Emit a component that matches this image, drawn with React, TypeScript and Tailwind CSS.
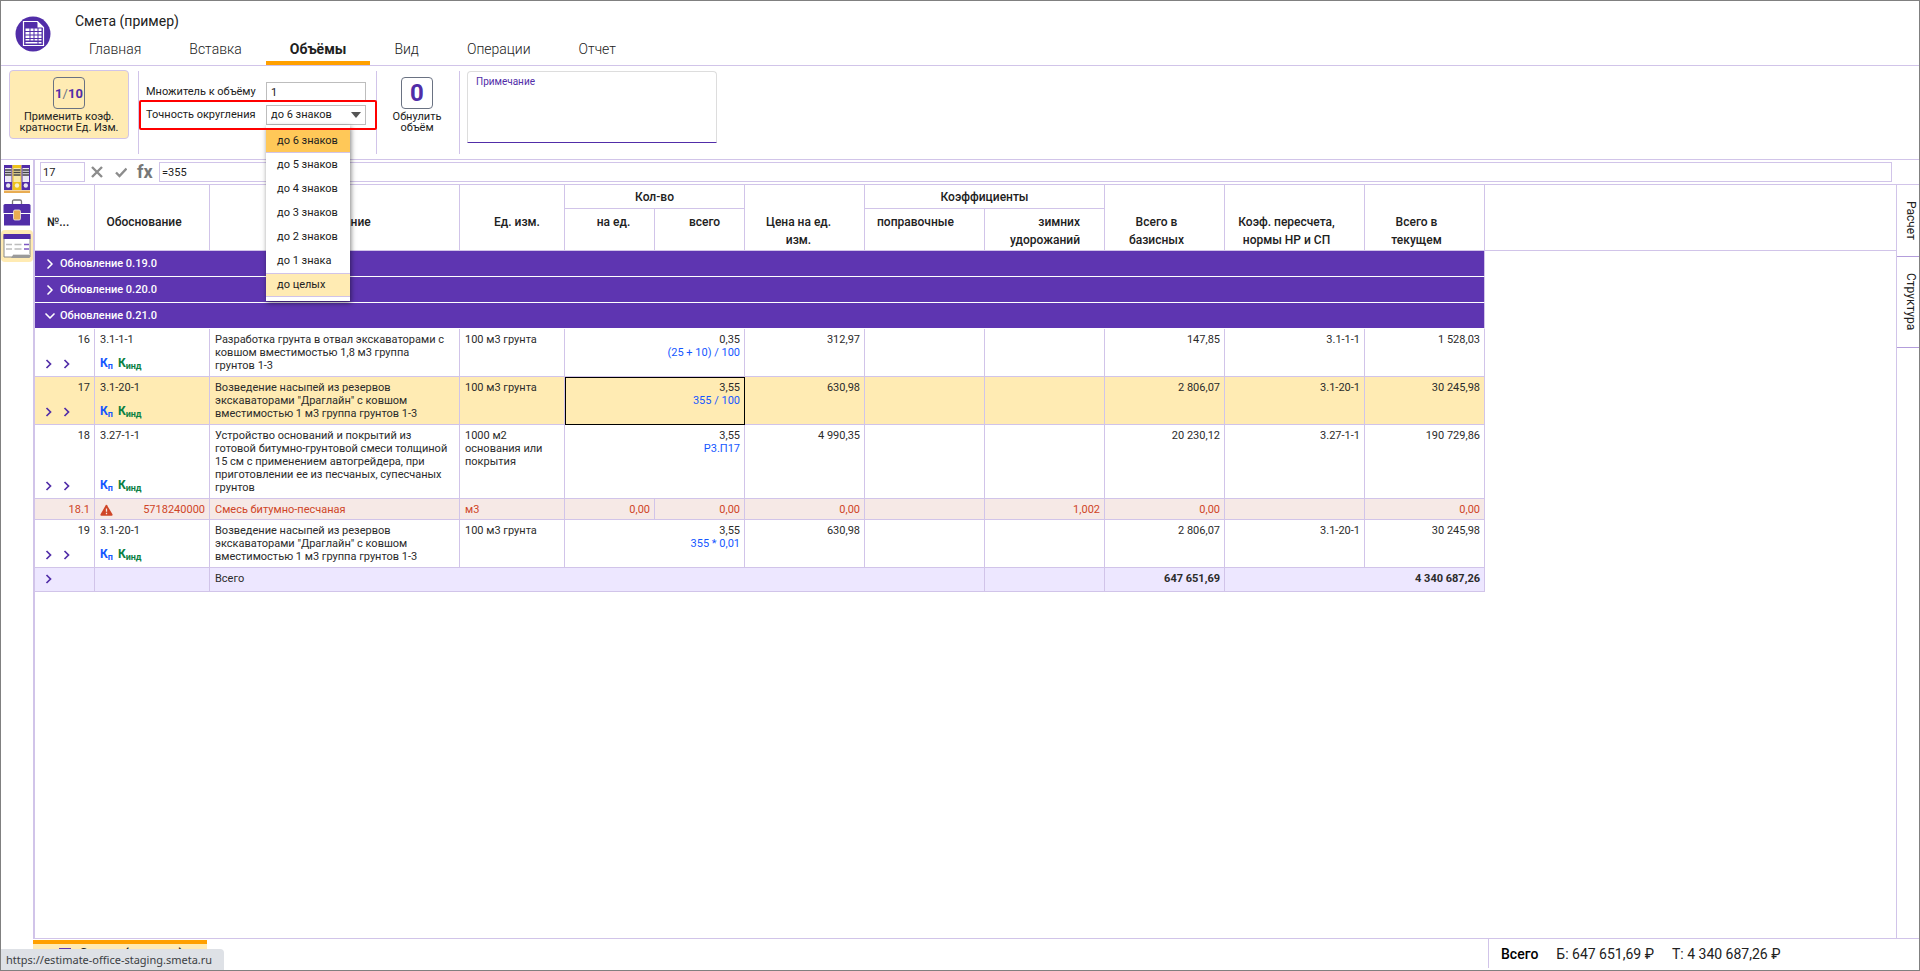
import { useState } from 'react';
import clsx from 'clsx';
import { ChevronDown, ChevronRight } from 'lucide-react';

const tabs = ['Главная', 'Вставка', 'Объёмы', 'Вид', 'Операции', 'Отчет'];

const precisions = [
  'до 6 знаков',
  'до 5 знаков',
  'до 4 знаков',
  'до 3 знаков',
  'до 2 знаков',
  'до 1 знака',
  'до целых',
];

const sections = [
  { title: 'Обновление 0.19.0', open: false },
  { title: 'Обновление 0.20.0', open: false },
  { title: 'Обновление 0.21.0', open: true },
];

type Work = {
  num: string;
  code: string;
  name: string;
  unit: string;
  qty: string;
  formula: string;
  price: string;
  base: string;
  index: string;
  current: string;
};

const works: Work[] = [
  {
    num: '16',
    code: '3.1-1-1',
    name: 'Разработка грунта в отвал экскаваторами с ковшом вместимостью 1,8 м3 группа грунтов\u00a01-3',
    unit: '100 м3 грунта',
    qty: '0,35',
    formula: '(25 + 10) / 100',
    price: '312,97',
    base: '147,85',
    index: '3.1-1-1',
    current: '1 528,03',
  },
  {
    num: '17',
    code: '3.1-20-1',
    name: 'Возведение насыпей из резервов экскаваторами "Драглайн" с ковшом вместимостью 1 м3 группа грунтов\u00a01-3',
    unit: '100 м3 грунта',
    qty: '3,55',
    formula: '355 / 100',
    price: '630,98',
    base: '2 806,07',
    index: '3.1-20-1',
    current: '30 245,98',
  },
  {
    num: '18',
    code: '3.27-1-1',
    name: 'Устройство оснований и покрытий из готовой битумно-грунтовой смеси толщиной 15 см с применением автогрейдера, при приготовлении ее из песчаных, супесчаных грунтов',
    unit: '1000 м2 основания или покрытия',
    qty: '3,55',
    formula: 'Р3.П17',
    price: '4 990,35',
    base: '20 230,12',
    index: '3.27-1-1',
    current: '190 729,86',
  },
  {
    num: '19',
    code: '3.1-20-1',
    name: 'Возведение насыпей из резервов экскаваторами "Драглайн" с ковшом вместимостью 1 м3 группа грунтов\u00a01-3',
    unit: '100 м3 грунта',
    qty: '3,55',
    formula: '355 * 0,01',
    price: '630,98',
    base: '2 806,07',
    index: '3.1-20-1',
    current: '30 245,98',
  },
];

const cell = 'border-r border-b border-[#d1c4e9] pt-1 align-top';
const textCell = clsx(cell, 'pl-[5px] pr-[7px]');
const numCell = clsx(cell, 'pl-1 pr-1 text-right');
const head = 'border-r border-b border-[#d1c4e9] align-top font-medium';

function Logo() {
  return (
    <svg viewBox="0 0 36 36" className="size-9 shrink-0" aria-hidden="true">
      <circle cx="18" cy="18" r="17.5" fill="#512da8" />
      <path d="M8.5 5.5h14l6 6v18h-20z" fill="none" stroke="#fff" strokeWidth="1.2" />
      <path d="M22.5 5.5v6h6z" fill="#fff" />
      <path
        d="M10.5 12.5h4V15h-4zM15.5 12.5h3V15h-3zM19.5 12.5h3V15h-3zM23.5 12.5h3V15h-3zM10.5 16h4v2.5h-4zM15.5 16h3v2.5h-3zM19.5 16h3v2.5h-3zM23.5 16h3v2.5h-3zM10.5 19.5h4V22h-4zM15.5 19.5h3V22h-3zM19.5 19.5h3V22h-3zM23.5 19.5h3V22h-3zM10.5 23h4v1.5h-4zM15.5 23h3v1.5h-3zM19.5 23h3v1.5h-3zM23.5 23h3v1.5h-3zM10.5 26h12v1.5h-12zM23.5 26h3v1.5h-3z"
        fill="#fff"
      />
    </svg>
  );
}

function FoldersIcon() {
  return (
    <svg viewBox="0 0 28 29" className="h-[29px] w-7" aria-hidden="true">
      <rect x="1" y="1" width="8.5" height="25" fill="#512da8" />
      <rect x="9.5" y="1" width="9" height="25" fill="#edc21c" />
      <rect x="18.5" y="1" width="8.5" height="25" fill="#512da8" />
      <path d="M2 4h6.5v14H2zM19.5 4H26v14h-6.5z" fill="#ece7f5" />
      <path d="M10.5 4h7v14h-7z" fill="#f7e9a6" />
      <path
        d="M2 6h6.5M2 8.5h6.5M2 11h6.5M10.5 6h7M10.5 8.5h7M10.5 11h7M19.5 6H26M19.5 8.5H26M19.5 11H26"
        stroke="#444"
        strokeWidth="1.3"
      />
      <circle cx="5.2" cy="21.5" r="2.2" fill="#e8e4f0" />
      <circle cx="14" cy="21.5" r="2.2" fill="#f5eecb" />
      <circle cx="22.8" cy="21.5" r="2.2" fill="#e8e4f0" />
      <rect x="1" y="26.5" width="26" height="2.5" fill="#e8ac52" />
    </svg>
  );
}

function CaseIcon() {
  return (
    <svg viewBox="0 0 28 27" className="h-[27px] w-7" aria-hidden="true">
      <path d="M9.5 5V2.5Q9.5 1 11 1h6q1.5 0 1.5 1.5V5" fill="none" stroke="#777" strokeWidth="1.3" />
      <path d="M2 5h24q1.5 0 1.5 1.5V14H.5V6.5Q.5 5 2 5z" fill="#512da8" />
      <path d="M1 15h26v11.5H1z" fill="#512da8" />
      <rect x="10.5" y="11" width="7" height="10" rx="1.5" fill="#e8ac52" stroke="#f3ecdf" strokeWidth=".8" />
    </svg>
  );
}

function SheetIcon() {
  return (
    <svg viewBox="0 0 28 25" className="h-[25px] w-7" aria-hidden="true">
      <path d="M1 1.5h26V23H1z" fill="#fff" stroke="#8a8a8a" />
      <path d="M.5 0h27v5H.5z" fill="#512da8" />
      <path d="M3 10.5h6M11.5 10.5h7M3 15h6M11.5 15h7" stroke="#bdbdbd" strokeWidth="1.3" />
      <path d="M21 10.5h5M21 15h5" stroke="#7e57c2" strokeWidth="1.3" />
      <path d="M8 24l2-3h17v2l-1 1z" fill="#9a9a9a" />
      <path d="M10 20.5h17" stroke="#ddd" />
    </svg>
  );
}

function WarningIcon() {
  return (
    <svg viewBox="0 0 24 22" className="h-3 w-[13px]" role="img" aria-label="Предупреждение">
      <path d="M11 1.5q1-1 2 .5l10 17q.8 2.5-1.5 2.5h-19Q.2 21.500 1 19L11 1.500z" fill="#cf4527" />
      <path d="M12 8v6M12 16v3" stroke="#f7e8e3" strokeWidth="2.4" />
    </svg>
  );
}

function RowChevron() {
  return (
    <button type="button" aria-label="Развернуть" className="flex h-3 w-[18px] items-center text-[#512da8]">
      <svg viewBox="0 0 8 10" className="h-[10px] w-2" fill="none" stroke="currentColor" strokeWidth="1.7">
        <path d="M1.5 1l4 4-4 4" />
      </svg>
    </button>
  );
}

function Header({ active, onSelect }: { active: string; onSelect: (tab: string) => void }) {
  return (
    <header className="flex h-[65px] shrink-0 border-b border-[#d1c4e9] pl-[14px]">
      <div className="pt-[15px]">
        <Logo />
      </div>
      <div className="flex flex-col justify-between pl-[14px] pt-2">
        <h1 className="pl-2.5 text-sm leading-6">Смета (пример)</h1>
        <nav className="flex">
          {tabs.map(tab => (
            <button
              key={tab}
              type="button"
              onClick={() => onSelect(tab)}
              className={clsx(
                'h-8 border-b-4 px-6 pt-1 text-sm leading-5',
                tab === active ? 'border-[#ffa000] font-bold' : 'border-transparent font-light',
              )}
            >
              {tab}
            </button>
          ))}
        </nav>
      </div>
    </header>
  );
}

function Ribbon() {
  const [precision, setPrecision] = useState(precisions[0]);
  const hovered = 'до целых';

  return (
    <section className="flex h-[94px] shrink-0 border-b border-[#d1c4e9] pl-2 pt-1 text-[11px]">
      <button
        type="button"
        className="flex h-[69px] w-[120px] flex-col items-center rounded-sm border border-[#d1c4e9] bg-[#ffebb3] pt-1.5 leading-[11px]"
      >
        <span className="mb-0.5 flex size-8 items-center justify-center rounded border border-gray-500 text-[13px] font-bold text-[#512da8]">
          1<span className="font-normal text-gray-500">/</span>10
        </span>
        Применить коэф.
        <br />
        кратности Ед. Изм.
      </button>

      {/* Multiplier and rounding */}
      <div className="relative ml-[9px] mt-px h-[83px] w-[239px] border-x border-[#d1c4e9] pl-[7px] pt-[11px]">
        <div className="flex h-[23px] items-start">
          <label htmlFor="factor" className="w-[120px] leading-5">Множитель к объёму</label>
          <input id="factor" defaultValue="1" className="h-5 w-[100px] border border-[#bdbdbd] px-1" />
        </div>
        <div className="relative flex items-start">
          <label htmlFor="precision" className="w-[120px] leading-5">Точность округления</label>
          <select
            id="precision"
            value={precision}
            onChange={e => setPrecision(e.target.value)}
            className="h-5 w-[100px] appearance-none border border-[#bdbdbd] px-1"
          >
            {precisions.map(item => (
              <option key={item}>{item}</option>
            ))}
          </select>
          <svg viewBox="0 0 10 6" className="pointer-events-none absolute left-[205px] top-[7px] h-1.5 w-2.5" aria-hidden="true">
            <path d="M0 0h10L5 6z" fill="#555" />
          </svg>
          <ul className="absolute left-[120px] top-5 z-10 w-[84px] bg-white py-1 shadow-[1px_2px_5px_rgba(0,0,0,0.5)]">
            {precisions.map(item => (
              <li key={item}>
                <button
                  type="button"
                  onClick={() => setPrecision(item)}
                  className={clsx(
                    'h-6 w-full border-y pl-[11px] text-left leading-5',
                    item === precision && 'border-t-transparent border-b-[#d1c4e9] bg-[#ffc858]',
                    item === hovered && 'border-[#d1c4e9] bg-[#ffebb3]',
                    item !== precision && item !== hovered && 'border-transparent',
                  )}
                >
                  {item}
                </button>
              </li>
            ))}
          </ul>
        </div>
        <div className="pointer-events-none absolute left-0 top-[29px] z-20 h-[30px] w-[238px] rounded-xs border-2 border-[#ff0000]" />
      </div>

      <button type="button" className="flex w-[82px] flex-col items-center pr-0.5 pt-[7px] leading-[11px]">
        <span className="mb-0.5 flex size-8 items-center justify-center rounded border border-gray-500 text-2xl font-bold text-[#512da8]">
          0
        </span>
        Обнулить
        <br />
        объём
      </button>

      <div className="mt-px h-[83px] border-l border-[#d1c4e9] pl-[7px]">
        <div className="flex h-[72px] w-[250px] flex-col rounded-t border border-b-[#512da8] border-[#ddd] px-2">
          <label htmlFor="note" className="pt-1 text-[10px] leading-3 text-[#512da8]">Примечание</label>
          <textarea id="note" className="w-full grow resize-none outline-none" />
        </div>
      </div>
    </section>
  );
}

function FormulaBar() {
  return (
    <div className="flex h-[25px] shrink-0 items-start border-b border-[#d1c4e9] pl-[5px] pr-[27px] pt-0.5 text-[11px]">
      <input aria-label="Строка" defaultValue="17" className="h-5 w-[45px] border border-[#d1c4e9] px-0.5" />
      <button type="button" aria-label="Отменить" className="ml-1.5 mt-1">
        <svg viewBox="0 0 12 12" className="size-3" stroke="#8c8c8c" strokeWidth="2.4">
          <path d="M1 1l10 10M11 1L1 11" />
        </svg>
      </button>
      <button type="button" aria-label="Применить" className="ml-3 mt-1">
        <svg viewBox="0 0 12 12" className="size-3" fill="none" stroke="#8c8c8c" strokeWidth="2.4">
          <path d="M1 6.5L4.500 10l7-7.500" />
        </svg>
      </button>
      <span className="ml-2.5 w-[22px] text-lg font-bold leading-5 text-[#777]">fx</span>
      <input aria-label="Формула" defaultValue="=355" className="h-5 grow border border-[#d1c4e9] px-0.5" />
    </div>
  );
}

function WorkRow({ work, selected }: { work: Work; selected: boolean }) {
  return (
    <tr className={clsx('h-12', selected && 'bg-[#ffebb3]')}>
      <td className={clsx(numCell, 'h-px')}>
        <div className="flex h-full flex-col justify-between pb-1.5">
          {work.num}
          <div className="flex pl-1.5">
            <RowChevron />
            <RowChevron />
          </div>
        </div>
      </td>
      <td className={clsx(textCell, 'h-px')}>
        <div className="flex h-full flex-col justify-between pb-1.5">
          {work.code}
          <div className="flex gap-[5px] text-xs font-bold leading-[13px]">
            <span className="text-[#1557ff]">К<sub>п</sub></span>
            <span className="text-[#0b8043]">К<sub>инд</sub></span>
          </div>
        </div>
      </td>
      <td className={clsx(textCell, 'pb-1')}>{work.name}</td>
      <td className={textCell}>{work.unit}</td>
      <td colSpan={2} className={clsx(numCell, selected && 'outline -outline-offset-1 outline-black')}>
        {work.qty}
        <div className="text-[#1557ff]">{work.formula}</div>
      </td>
      <td className={numCell}>{work.price}</td>
      <td className={cell} />
      <td className={cell} />
      <td className={numCell}>{work.base}</td>
      <td className={numCell}>{work.index}</td>
      <td className={numCell}>{work.current}</td>
      <td className="bg-white" />
    </tr>
  );
}

function EstimateTable() {
  return (
    <table className="w-full table-fixed border-separate border-spacing-0 text-[11px] leading-[13px]">
      <colgroup>
        <col className="w-[60px]" />
        <col className="w-[115px]" />
        <col className="w-[250px]" />
        <col className="w-[105px]" />
        <col className="w-[90px]" />
        <col className="w-[90px]" />
        <col className="w-[120px]" />
        <col className="w-[120px]" />
        <col className="w-[120px]" />
        <col className="w-[120px]" />
        <col className="w-[140px]" />
        <col className="w-[120px]" />
        <col />
      </colgroup>
      <thead className="text-xs leading-[18px]">
        <tr className="h-6">
          <th rowSpan={2} className={clsx(head, 'pl-3 pt-7 text-left')}>№...</th>
          <th rowSpan={2} className={clsx(head, 'pr-4 pt-7')}>Обоснование</th>
          <th rowSpan={2} className={clsx(head, 'pr-3 pt-7')}>Наименование</th>
          <th rowSpan={2} className={clsx(head, 'pl-2.5 pt-7')}>Ед. изм.</th>
          <th colSpan={2} className={clsx(head, 'pt-[3px]')}>Кол-во</th>
          <th rowSpan={2} className={clsx(head, 'pl-3 pr-6 pt-7')}>Цена на ед. изм.</th>
          <th colSpan={2} className={clsx(head, 'pt-[3px]')}>Коэффициенты</th>
          <th rowSpan={2} className={clsx(head, 'pl-5 pr-9 pt-7')}>Всего в базисных</th>
          <th rowSpan={2} className={clsx(head, 'pr-4 pt-7')}>Коэф. пересчета, нормы НР и СП</th>
          <th rowSpan={2} className={clsx(head, 'pl-5 pr-9 pt-7')}>Всего в текущем</th>
          <th rowSpan={2} className="border-b border-[#d1c4e9]" />
        </tr>
        <tr className="h-[42px]">
          <th className={clsx(head, 'pl-2 pt-1')}>на ед.</th>
          <th className={clsx(head, 'pl-2.5 pt-1')}>всего</th>
          <th className={clsx(head, 'pl-3 pt-1 text-left')}>поправочные</th>
          <th className={clsx(head, 'pl-3 pr-6 pt-1 text-right')}>зимних удорожаний</th>
        </tr>
      </thead>
      <tbody className="text-[#2b2b2b]">
        {sections.map(section => {
          const Chevron = section.open ? ChevronDown : ChevronRight;
          return (
            <tr key={section.title} className="h-[26px]">
              <td colSpan={12} className="border-r border-b border-r-[#d1c4e9] border-b-white bg-[#5e35b1] p-0">
                <button type="button" className="flex items-center gap-0.5 pl-[7px] font-medium text-white">
                  <Chevron className="size-4" strokeWidth={2.5} />
                  {section.title}
                </button>
              </td>
              <td />
            </tr>
          );
        })}
        {works.slice(0, 3).map(work => (
          <WorkRow key={work.num} work={work} selected={work.num === '17'} />
        ))}
        <tr className="h-[21px] bg-[#f6e9e6] text-[#cf4527]">
          <td className={numCell}>18.1</td>
          <td className={clsx(cell, 'pl-[5px] pr-1')}>
            <div className="flex items-center justify-between">
              <WarningIcon />
              5718240000
            </div>
          </td>
          <td className={textCell}>Смесь битумно-песчаная</td>
          <td className={textCell}>м3</td>
          <td className={numCell}>0,00</td>
          <td className={numCell}>0,00</td>
          <td className={numCell}>0,00</td>
          <td className={cell} />
          <td className={numCell}>1,002</td>
          <td className={numCell}>0,00</td>
          <td className={cell} />
          <td className={numCell}>0,00</td>
          <td className="bg-white" />
        </tr>
        <WorkRow work={works[3]} selected={false} />
        <tr className="h-6 bg-[#ede7ff]">
          <td className={cell}>
            <div className="pl-2.5 pt-px">
              <RowChevron />
            </div>
          </td>
          <td className={cell} />
          <td colSpan={6} className={textCell}>Всего</td>
          <td className={cell} />
          <td className={clsx(numCell, 'font-bold')}>647 651,69</td>
          <td className={clsx(numCell, 'font-bold')} colSpan={2}>4 340 687,26</td>
          <td className="bg-white" />
        </tr>
      </tbody>
    </table>
  );
}

export default function App() {
  const [tab, setTab] = useState('Объёмы');

  return (
    <div className="relative flex h-screen flex-col overflow-hidden border border-[#808080] bg-white font-[Roboto,sans-serif] text-[#212121]">
      <Header active={tab} onSelect={setTab} />
      <Ribbon />

      <div className="flex min-h-0 grow">
        <aside className="flex w-8 shrink-0 flex-col items-center pt-1">
          <button type="button" aria-label="Справочники"><FoldersIcon /></button>
          <button type="button" aria-label="Портфель" className="mt-1.5"><CaseIcon /></button>
          <button type="button" aria-label="Сметы" className="mt-1 flex h-8 w-8 items-center justify-center rounded bg-[#ffebb3]">
            <SheetIcon />
          </button>
        </aside>

        <div className="flex min-w-0 grow flex-col">
          <div className="flex min-h-0 grow flex-col border-b border-l-2 border-[#d1c4e9]">
            <FormulaBar />
            <div className="flex min-h-0 grow">
              <main className="min-w-0 grow overflow-hidden">
                <EstimateTable />
              </main>
              <nav className="flex w-[23px] shrink-0 flex-col border-l border-[#d1c4e9] text-xs">
                <button type="button" className="flex h-[72px] items-center justify-center border-b border-[#b39ddb] pl-1.5 [writing-mode:vertical-rl]">
                  Расчет
                </button>
                <button type="button" className="flex h-[91px] items-center justify-center border-b border-[#b39ddb] pl-1.5 [writing-mode:vertical-rl]">
                  Структура
                </button>
              </nav>
            </div>
          </div>

          <footer className="flex h-[31px] shrink-0 items-start justify-between text-sm">
            <button type="button" className="mt-px flex h-[30px] w-[174px] items-start gap-2 border-t-4 border-[#ffa000] bg-[#ffebb3] pl-[26px] font-medium">
              <span className="mt-1 size-3 bg-[#5e35b1]" />
              Смета (пример)
            </button>
            <div className="flex h-[29px] w-[431px] items-center gap-[18px] border-l border-[#d1c4e9] pl-3">
              <span className="font-medium text-black">Всего</span>
              <span>Б: 647 651,69 ₽</span>
              <span>Т: 4 340 687,26 ₽</span>
            </div>
          </footer>
        </div>
      </div>

      {/* Link preview */}
      <div className="absolute bottom-0 left-0 rounded-tr bg-[#dee1e6] pl-[5px] pr-3 font-['Noto_Sans',sans-serif] text-[11px] leading-[21px] text-[#3c4043]">
        https://estimate-office-staging.smeta.ru
      </div>
    </div>
  );
}
